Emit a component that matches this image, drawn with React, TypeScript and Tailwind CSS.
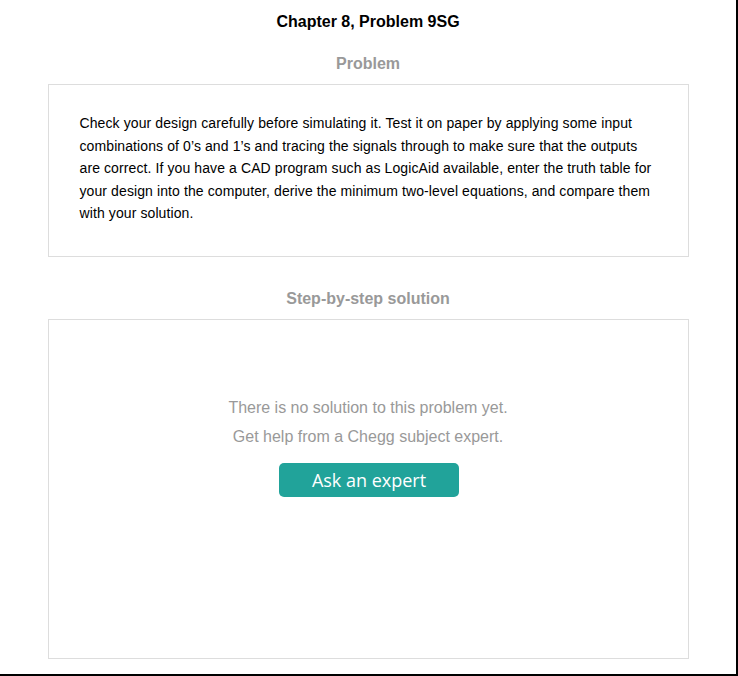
import React from 'react';

const PROBLEM_TEXT =
  "Check your design carefully before simulating it. Test it on paper by applying some input combinations of 0’s and 1’s and tracing the signals through to make sure that the outputs are correct. If you have a CAD program such as LogicAid available, enter the truth table for your design into the computer, derive the minimum two-level equations, and compare them with your solution.";

export default function App() {
  return (
    <div className="w-[738px] h-[676px] bg-white border-r-2 border-b-2 border-black font-['Liberation_Sans',Arial,sans-serif] overflow-hidden">
      <div className="flex flex-col items-center">
        <h1 className="mt-[12px] text-[16px] leading-[20px] font-bold text-black">Chapter 8, Problem 9SG</h1>

        <h2 className="mt-[22px] text-[16px] leading-[20px] font-bold text-[#999]">Problem</h2>
        <div className="mt-[10px] w-[641px] border border-[#ddd] pt-[27px] pb-[31px] pl-[31px] pr-[29px]">
          <p className="text-[14px] leading-[22.5px] tracking-[0.1px] text-black">{PROBLEM_TEXT}</p>
        </div>

        <h2 className="mt-[32px] text-[16px] leading-[20px] font-bold text-[#999]">Step-by-step solution</h2>
        <div className="mt-[10px] w-[641px] h-[340px] border border-[#ddd] flex flex-col items-center pt-[73px]">
          <p className="text-[16px] leading-[29px] text-[#999]">There is no solution to this problem yet.</p>
          <p className="text-[16px] leading-[29px] text-[#999]">Get help from a Chegg subject expert.</p>
          <button className="mt-[12px] ml-[2px] w-[180px] h-[34px] rounded-[5px] bg-[#21a39a] text-white text-[18px] font-['Open_Sans',sans-serif] leading-none">
            Ask an expert
          </button>
        </div>
      </div>
    </div>
  );
}
